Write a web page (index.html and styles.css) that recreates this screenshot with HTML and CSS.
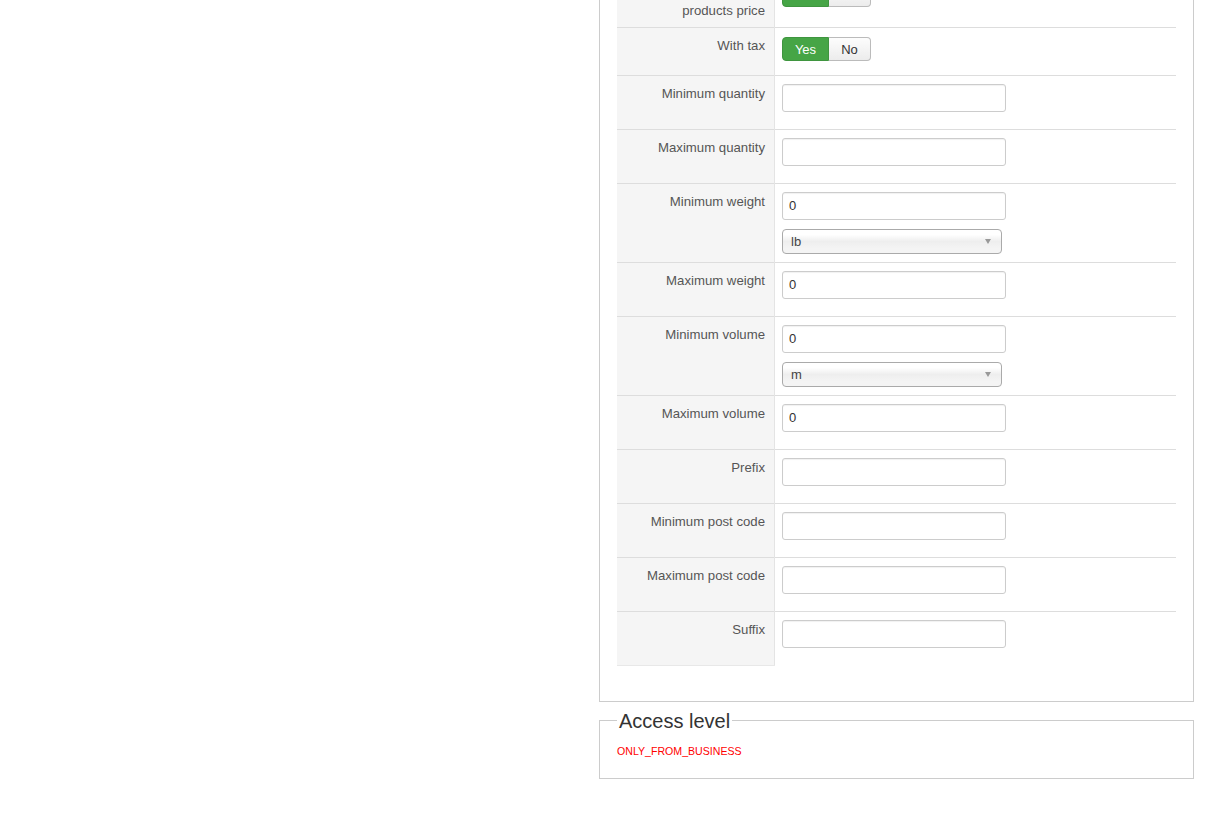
FILE: index.html
```html
<!DOCTYPE html>
<html>
<head>
<meta charset="utf-8">
<link rel="stylesheet" href="styles.css">
</head>
<body>
<div class="page">
  <fieldset class="box box-main">
    <table class="form-table">
      <tbody>
        <tr class="first">
          <td class="key">Apply on<br>products price</td>
          <td class="val">
            <div class="toggle"><span class="btn yes">Yes</span><span class="btn no">No</span></div>
          </td>
        </tr>
        <tr>
          <td class="key">With tax</td>
          <td class="val">
            <div class="toggle"><span class="btn yes">Yes</span><span class="btn no">No</span></div>
          </td>
        </tr>
        <tr>
          <td class="key">Minimum quantity</td>
          <td class="val"><input class="text" type="text" value=""></td>
        </tr>
        <tr>
          <td class="key">Maximum quantity</td>
          <td class="val"><input class="text" type="text" value=""></td>
        </tr>
        <tr>
          <td class="key">Minimum weight</td>
          <td class="val">
            <input class="text" type="text" value="0">
            <div class="select"><span>lb</span><span class="arrow"></span></div>
          </td>
        </tr>
        <tr>
          <td class="key">Maximum weight</td>
          <td class="val"><input class="text" type="text" value="0"></td>
        </tr>
        <tr>
          <td class="key">Minimum volume</td>
          <td class="val">
            <input class="text" type="text" value="0">
            <div class="select"><span>m</span><span class="arrow"></span></div>
          </td>
        </tr>
        <tr>
          <td class="key">Maximum volume</td>
          <td class="val"><input class="text" type="text" value="0"></td>
        </tr>
        <tr>
          <td class="key">Prefix</td>
          <td class="val"><input class="text" type="text" value=""></td>
        </tr>
        <tr>
          <td class="key">Minimum post code</td>
          <td class="val"><input class="text" type="text" value=""></td>
        </tr>
        <tr>
          <td class="key">Maximum post code</td>
          <td class="val"><input class="text" type="text" value=""></td>
        </tr>
        <tr class="last">
          <td class="key">Suffix</td>
          <td class="val"><input class="text" type="text" value=""></td>
        </tr>
      </tbody>
    </table>
  </fieldset>
  <fieldset class="box box-access">
    <legend>Access level</legend>
    <p class="warn">ONLY_FROM_BUSINESS</p>
  </fieldset>
</div>
</body>
</html>
```

FILE: styles.css
```css
html, body {
  margin: 0;
  padding: 0;
  background: #fff;
}
body {
  font-family: "Liberation Sans", Arial, Helvetica, sans-serif;
  font-size: 13px;
  line-height: 18px;
  color: #333;
}
.page {
  margin-left: 599px;
  width: 595px;
}
.box {
  margin: 0;
  border: 1px solid #ccc;
  padding: 0 17px 35px 17px;
  min-width: 0;
}
.box-main {
  margin-top: -28px;
}
.box-access {
  margin-top: 7px;
  padding-top: 10px;
  padding-bottom: 19px;
}
.box-access legend {
  font-size: 20px;
  line-height: 24px;
  color: #333;
  padding: 0 2px;
}
.warn {
  margin: 0;
  color: #f00;
  font-size: 10.6px;
  line-height: 16px;
}
.form-table {
  width: 559px;
  border-collapse: collapse;
  border-spacing: 0;
}
.form-table td {
  border-top: 1px solid #ddd;
  padding: 8px;
  vertical-align: top;
}
.form-table td.key {
  width: 140px;
  background: #f5f5f5;
  border-right: 1px solid #e4e4e4;
  text-align: right;
  color: #555;
  padding: 9px 9px 7px 8px;
  font-size: 13.2px;
}
.form-table tr.first td.key {
  padding-top: 10px;
  padding-bottom: 7px;
}
.form-table tr.last td.key {
  border-bottom: 1px solid #e8e8e8;
}
.form-table td.val {
  padding-left: 7px;
}
.toggle {
  display: flex;
  margin: 1px 0 6px 0;
  height: 24px;
}
.btn {
  display: block;
  box-sizing: border-box;
  height: 24px;
  padding-top: 1px;
  line-height: 22px;
  font-size: 13px;
  text-align: center;
  border: 1px solid #bbb;
}
.btn.yes {
  width: 47px;
  background: #46a546;
  border-color: #3f953f;
  color: #fff;
  border-radius: 4px 0 0 4px;
}
.btn.no {
  width: 42px;
  background: linear-gradient(#fdfdfd, #ececec);
  border-left: 0;
  color: #333;
  border-radius: 0 4px 4px 0;
}
input.text {
  display: block;
  box-sizing: border-box;
  width: 224px;
  height: 28px;
  margin: 0 0 9px 0;
  padding: 3px 6px 5px 6px;
  border: 1px solid #ccc;
  border-radius: 3px;
  background: #fff;
  font-family: "Liberation Sans", Arial, Helvetica, sans-serif;
  font-size: 13px;
  color: #333;
  box-shadow: inset 0 1px 1px rgba(0,0,0,0.06);
}
.select {
  box-sizing: border-box;
  width: 220px;
  height: 25px;
  border: 1px solid #aaa;
  border-radius: 4px;
  background: linear-gradient(#ffffff 20%, #eeeeee 50%, #f4f4f4 80%);
  display: flex;
  align-items: center;
  justify-content: space-between;
  padding: 0 10px 0 8px;
  font-size: 13px;
  color: #444;
}
.select .arrow {
  width: 0;
  height: 0;
  border-left: 3.5px solid transparent;
  border-right: 3.5px solid transparent;
  border-top: 5px solid #999;
}
```
